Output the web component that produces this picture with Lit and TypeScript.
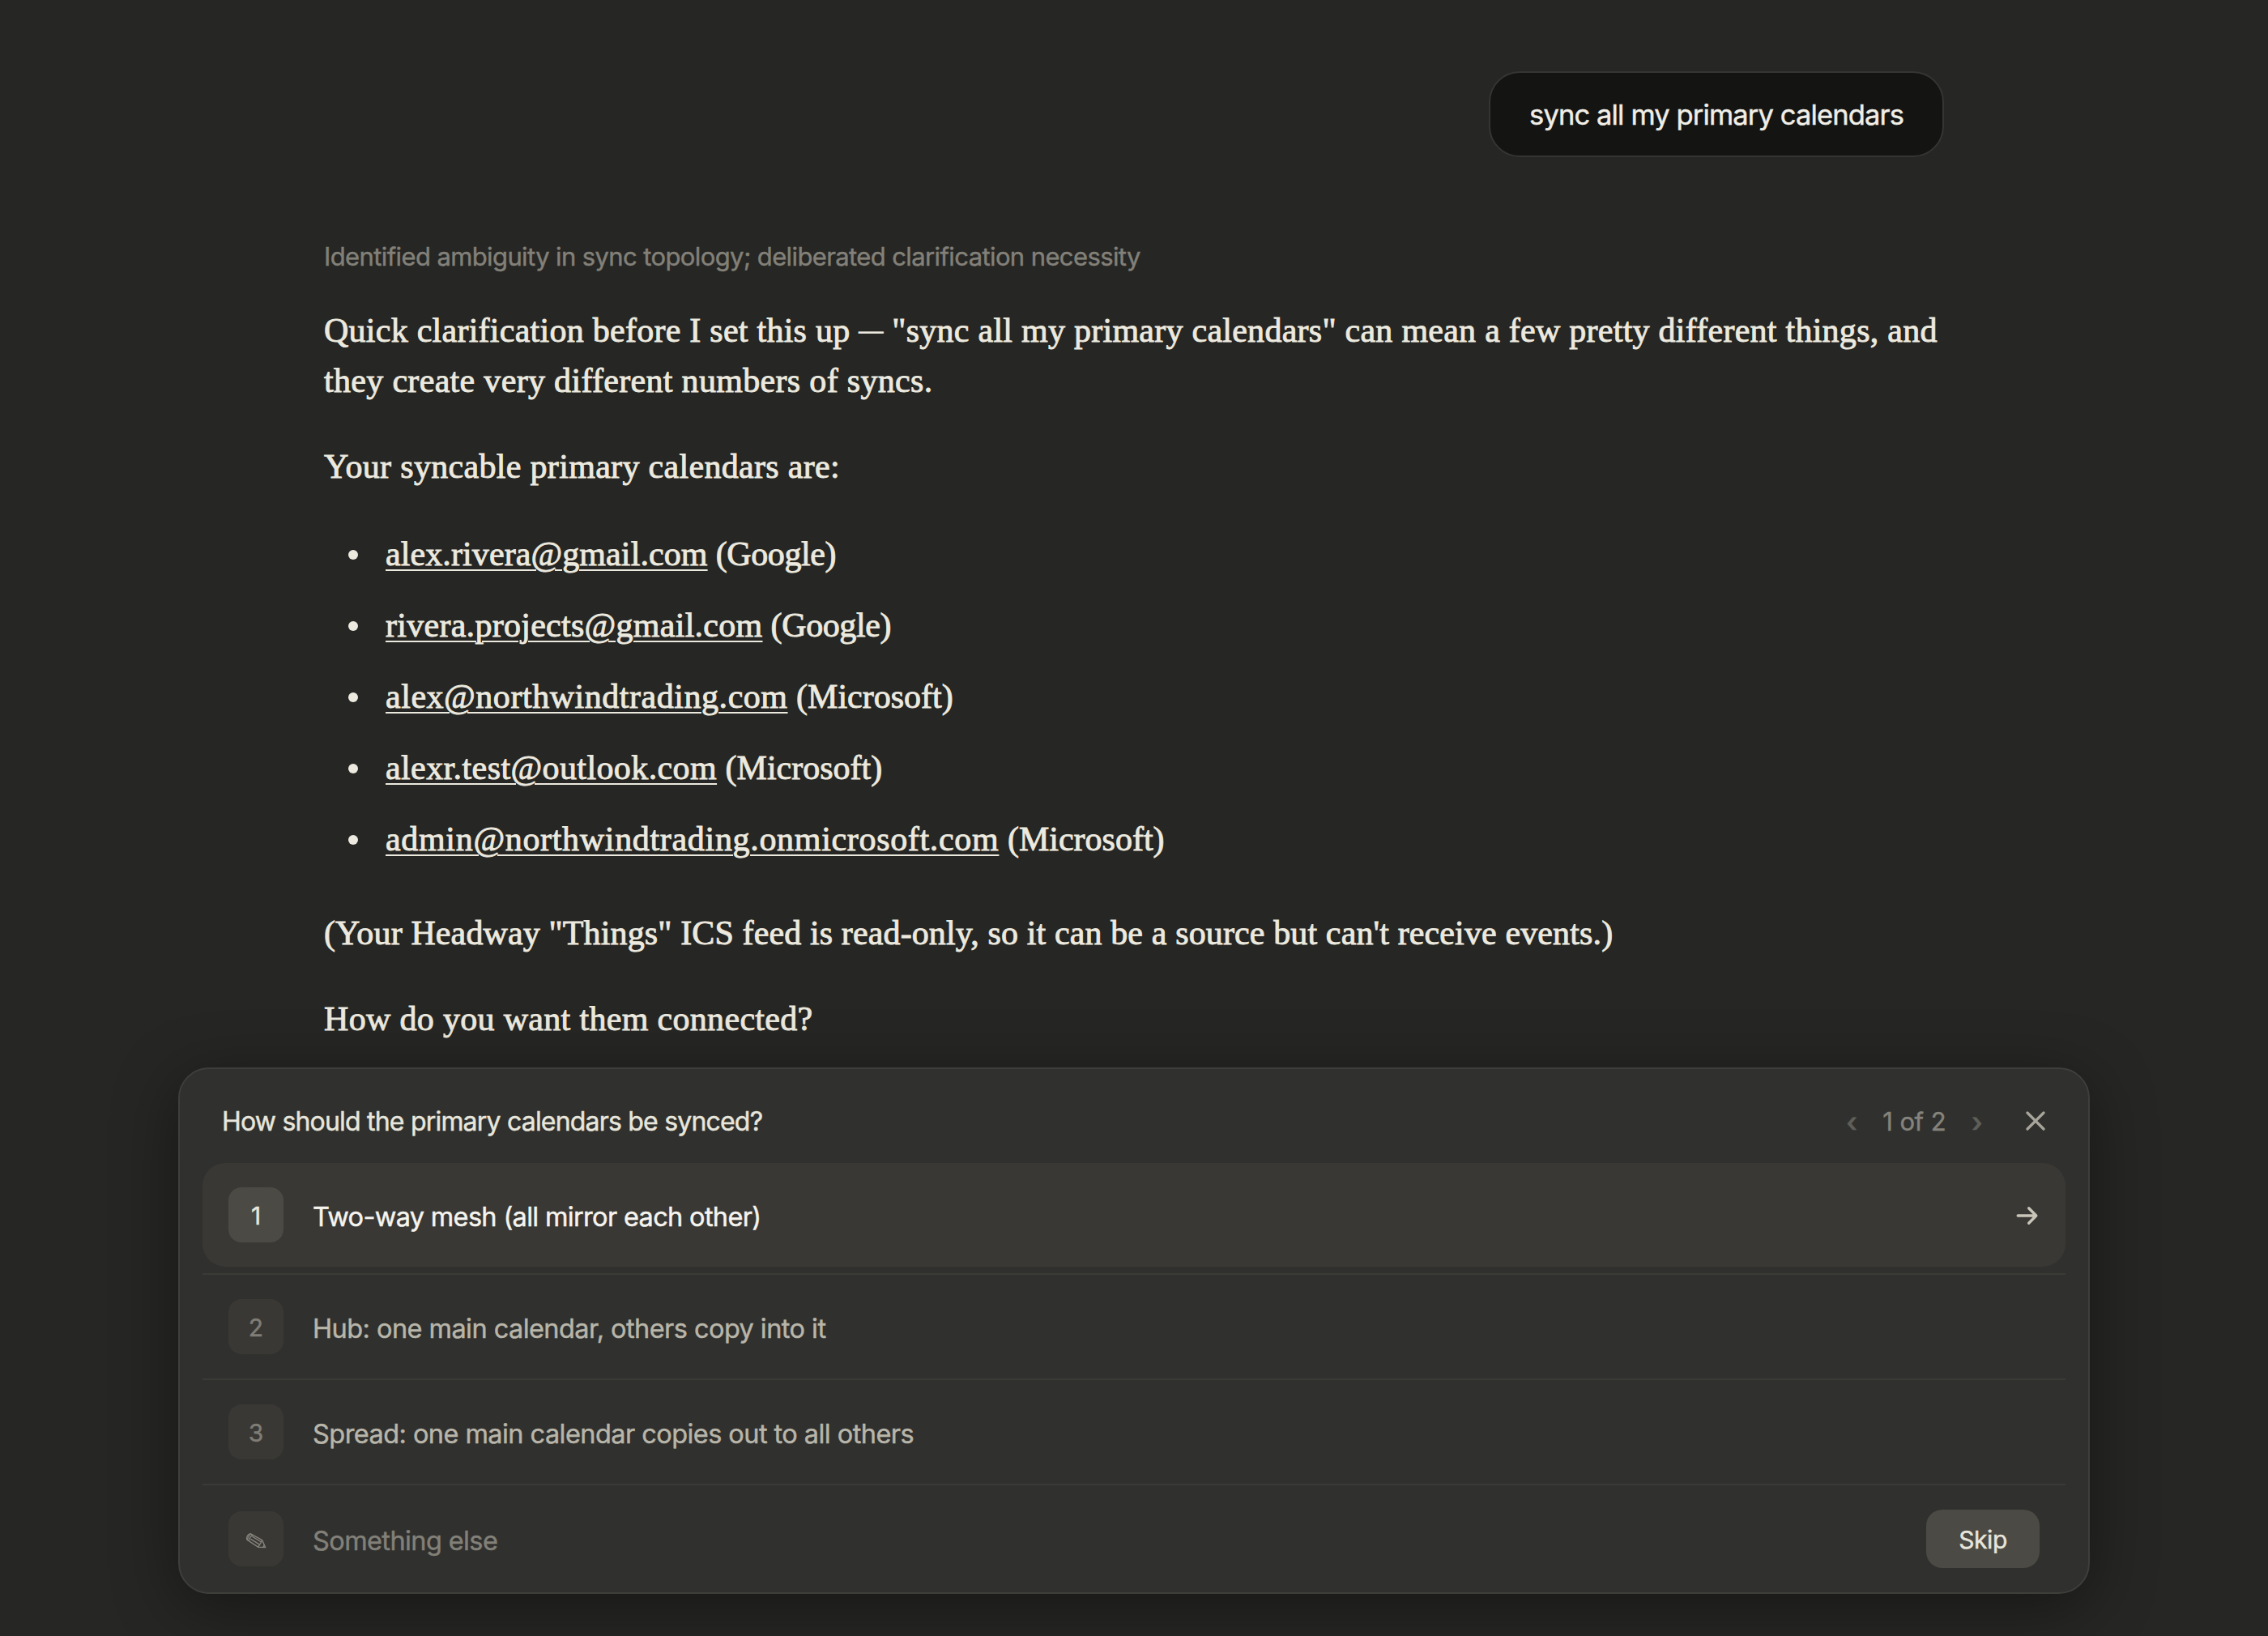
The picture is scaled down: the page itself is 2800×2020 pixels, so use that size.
import { LitElement, html, css, svg } from "lit";
import { customElement, property } from "lit/decorators.js";
import { classMap } from "lit/directives/class-map.js";
import { styleMap } from "lit/directives/style-map.js";

// tracking is the letter spacing of the address, in px
const accounts = [
  { email: "alex.rivera@gmail.com", provider: "Google", tracking: 0.1 },
  { email: "rivera.projects@gmail.com", provider: "Google", tracking: 0.28 },
  { email: "alex@northwindtrading.com", provider: "Microsoft", tracking: 0.54 },
  { email: "alexr.test@outlook.com", provider: "Microsoft", tracking: 0.4 },
  { email: "admin@northwindtrading.onmicrosoft.com", provider: "Microsoft", tracking: 0.68 },
];

const choices = [
  "Two-way mesh (all mirror each other)",
  "Hub: one main calendar, others copy into it",
  "Spread: one main calendar copies out to all others",
];

const closeIcon = svg`<path d="M2 2 22 22M22 2 2 22" />`;
const arrowIcon = svg`<path d="M2.2 13H24.6M15.7 3.8 24.8 13l-9.1 9.2" />`;
const pencilIcon = svg`
  <path d="M2 9.2C.6 6.4 3 1.8 6.6 1.8L20.6 9.6 24.6 18.6 15.6 18.2Z" />
  <path d="M2 9.2C3 5.6 5 3 6.6 1.8M4 10.4C5 7 7 4.4 9 3.2M6.2 8.2 17.6 15.2M8.4 5.2 19.6 12M15.6 18.2 17.6 15.2 19.6 12 20.6 9.6M21.8 18.4 23.2 15.8" />
`;

@customElement("choice-row")
export class ChoiceRow extends LitElement {
  @property() label = "";
  @property({ type: Number }) index = 1;
  @property({ type: Boolean }) selected = false;

  static styles = css`
    :host {
      display: block;
    }
    .row {
      display: flex;
      align-items: center;
      height: 128px;
      padding: 0 32px;
      box-sizing: border-box;
      color: #b8b5a9;
    }
    .row.selected {
      background: #3a3834;
      border-radius: 28px;
      margin-bottom: 8px;
      color: #f5f4ef;
    }
    .badge {
      display: grid;
      place-items: center;
      width: 68px;
      height: 68px;
      padding-top: 2px;
      box-sizing: border-box;
      border-radius: 16px;
      background: #3a3834;
      color: #7f7d76;
      font-size: 30px;
    }
    .selected .badge {
      background: #4b4a45;
      color: #e8e6dc;
    }
    .label {
      flex: 1;
      margin-left: 36px;
      padding-top: 5px;
      font-size: 32.5px;
      letter-spacing: -0.56px;
      line-height: 48px;
    }
    .selected .label {
      letter-spacing: -0.67px;
    }
    .arrow {
      width: 28px;
      height: 26px;
      margin: 2px 1px 0 0;
      fill: none;
      stroke: #c9c5b9;
      stroke-width: 3.4;
      stroke-linecap: round;
      stroke-linejoin: round;
    }
  `;

  render() {
    return html`
      <div class=${classMap({ row: true, selected: this.selected })}>
        <span class="badge">${this.index}</span>
        <span class="label">${this.label}</span>
        ${this.selected ? html`<svg class="arrow" viewBox="0 0 28 26">${arrowIcon}</svg>` : ""}
      </div>
    `;
  }
}

@customElement("question-panel")
export class QuestionPanel extends LitElement {
  static styles = css`
    :host {
      display: block;
      box-sizing: border-box;
      padding: 0 28px;
      background: #30302e;
      border: 2px solid #3e3e3b;
      border-radius: 38px;
      box-shadow: 0 16px 80px rgba(0, 0, 0, 0.4);
    }
    .header {
      display: flex;
      align-items: center;
      height: 116px;
      padding: 24px 25px 12px 24px;
      box-sizing: border-box;
    }
    .title {
      flex: 1;
      font-size: 32px;
      letter-spacing: -0.8px;
      color: #e8e6dc;
    }
    .pager {
      display: flex;
      align-items: center;
      gap: 32px;
      padding-top: 1px;
      font-size: 31px;
      letter-spacing: -0.7px;
      word-spacing: 1.5px;
      color: #85837b;
    }
    .step {
      color: #5f5e59;
      font-size: 33px;
      font-weight: 600;
    }
    .close {
      width: 24px;
      height: 24px;
      margin-left: 54px;
      fill: none;
      stroke: #a8a59b;
      stroke-width: 3.2;
      stroke-linecap: round;
    }
    choice-row + choice-row,
    .other {
      border-top: 2px solid #3a3a37;
    }
    .other {
      display: flex;
      align-items: center;
      height: 132px;
      padding: 0 32px;
    }
    .pencil {
      display: grid;
      place-items: center;
      width: 68px;
      height: 68px;
      padding-top: 3px;
      box-sizing: border-box;
      border-radius: 16px;
      background: #3a3834;
    }
    .pencil svg {
      width: 26px;
      height: 20px;
      fill: none;
      stroke: #85837b;
      stroke-width: 1.4;
      stroke-linejoin: round;
    }
    .placeholder {
      flex: 1;
      margin-left: 36px;
      padding-top: 4px;
      font-size: 32.5px;
      letter-spacing: -0.6px;
      color: #828078;
    }
    .skip {
      width: 140px;
      height: 72px;
      padding: 2px 0 0;
      border: none;
      border-radius: 20px;
      background: #4b4a45;
      color: #e8e6dc;
      font: inherit;
      font-size: 30px;
      letter-spacing: -0.4px;
      -webkit-text-stroke: inherit;
    }
  `;

  render() {
    return html`
      <div class="header">
        <span class="title">How should the primary calendars be synced?</span>
        <span class="pager">
          <span class="step">‹</span>
          <span>1 of 2</span>
          <span class="step">›</span>
        </span>
        <svg class="close" viewBox="0 0 24 24">${closeIcon}</svg>
      </div>
      ${choices.map(
        (label, i) => html`
          <choice-row .label=${label} .index=${i + 1} ?selected=${i === 0}></choice-row>
        `
      )}
      <div class="other">
        <span class="pencil"><svg viewBox="0 0 26 20">${pencilIcon}</svg></span>
        <span class="placeholder">Something else</span>
        <button class="skip">Skip</button>
      </div>
    `;
  }
}

@customElement("app-root")
export class AppRoot extends LitElement {
  static styles = css`
    :host {
      display: flex;
      flex-direction: column;
      box-sizing: border-box;
      height: 2020px;
      padding: 88px 220px 52px;
      background: #262624;
      font-family: Inter, "Liberation Sans", sans-serif;
      -webkit-text-stroke: 0.45px;
      overflow: hidden;
    }
    .thread {
      display: flex;
      flex-direction: column;
      width: 2000px;
      height: 1230px;
      margin: 0 auto;
    }
    .bubble {
      align-self: flex-end;
      padding: 25px 48px 23px;
      border: 2px solid #353533;
      border-radius: 38px;
      background: #141413;
      color: #f0eee6;
      font-size: 34.5px;
      line-height: 54px;
      letter-spacing: -0.87px;
    }
    .status {
      margin-top: 99px;
      color: #828078;
      font-size: 31px;
      line-height: 48px;
      letter-spacing: -0.61px;
    }
    .reply {
      margin-top: 36px;
      color: #ece9df;
      font-family: "Liberation Serif", serif;
      font-size: 42px;
      line-height: 62px;
      letter-spacing: 0.32px;
      -webkit-text-stroke: 0.9px;
    }
    p {
      margin: 0 0 44px;
      white-space: nowrap;
    }
    .lead {
      letter-spacing: 0.26px;
    }
    .note {
      letter-spacing: 0.13px;
    }
    .dash {
      font-size: 30px;
      line-height: 1;
      vertical-align: 4px;
    }
    ul {
      margin: 0 0 54px;
      padding: 2px 0 0;
      list-style: none;
      display: grid;
      gap: 26px;
    }
    li {
      display: flex;
      align-items: center;
      letter-spacing: 0;
    }
    li::before {
      content: "";
      width: 12px;
      height: 12px;
      margin: 2px 34px 0 30px;
      border-radius: 50%;
      background: currentColor;
    }
    .google {
      letter-spacing: -0.4px;
    }
    a {
      color: inherit;
      text-decoration: underline;
      text-decoration-thickness: 2px;
      text-underline-offset: 5px;
    }
  `;

  render() {
    return html`
      <div class="thread">
        <div class="bubble">sync all my primary calendars</div>
        <div class="status">Identified ambiguity in sync topology; deliberated clarification necessity</div>
        <div class="reply">
          <p>
            <span class="lead">Quick clarification before I set this up <span class="dash">—</span> "sync all my primary calendars" can mean a few pretty different things, and</span><br />
            <span>they create very different numbers of syncs.</span>
          </p>
          <p>Your syncable primary calendars are:</p>
          <ul>
            ${accounts.map(
              ({ email, provider, tracking }) => html`
                <li>
                  <span class=${provider.toLowerCase()}><a style=${styleMap({ letterSpacing: `${tracking}px` })}>${email}</a> (${provider})</span>
                </li>
              `
            )}
          </ul>
          <p class="note">(Your Headway "Things" ICS feed is read-only, so it can be a source but can't receive events.)</p>
          <p>How do you want them connected?</p>
        </div>
      </div>
      <question-panel></question-panel>
    `;
  }
}
